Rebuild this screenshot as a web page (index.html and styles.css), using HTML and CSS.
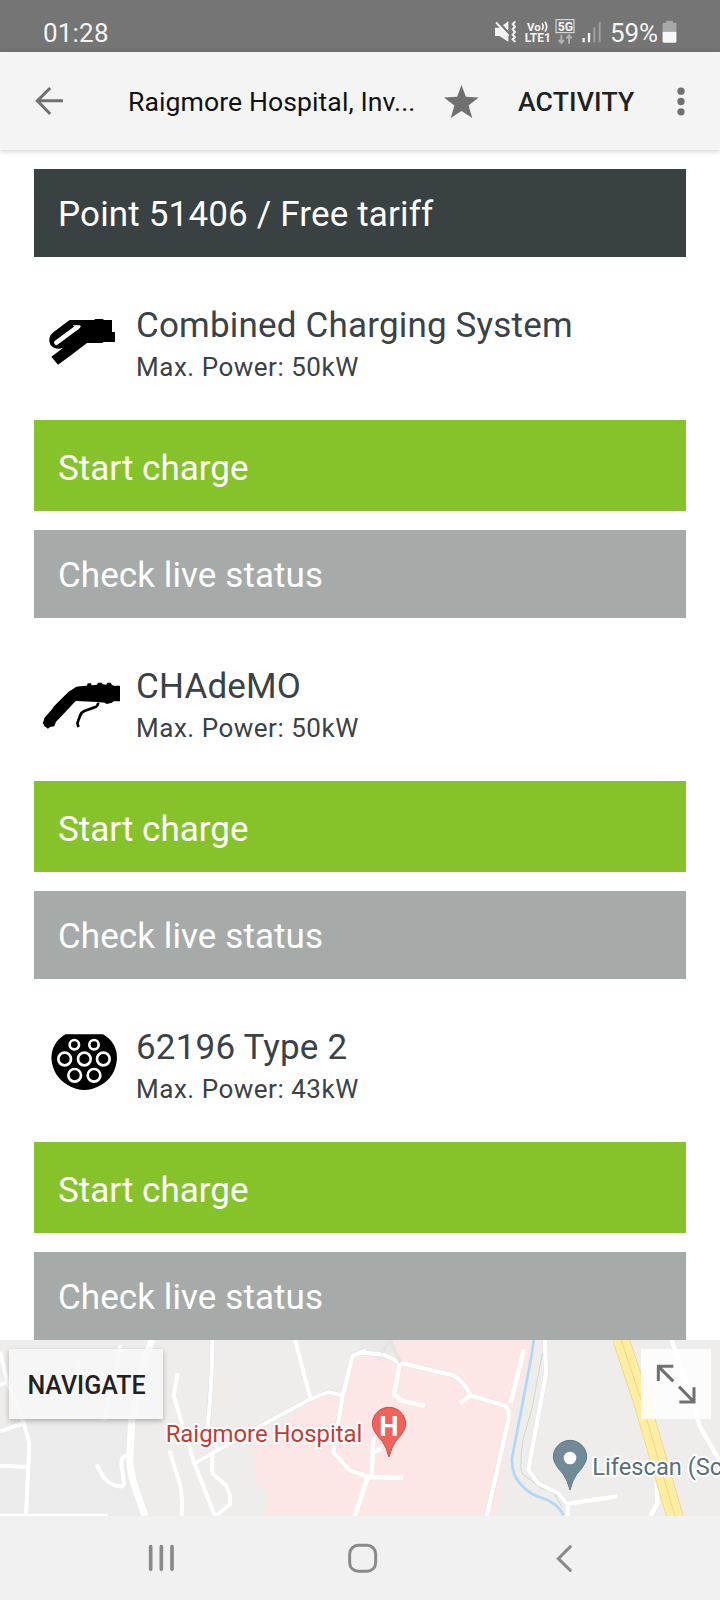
FILE: index.html
```html
<!DOCTYPE html>
<html lang="en">
<head>
  <meta charset="UTF-8" />
  <meta name="viewport" content="width=device-width, initial-scale=1.0"/>
  <title>Raigmore Hospital, Inverness</title>
  <link rel="stylesheet" href="styles.css">
</head>
<body>

  <div class="status-bar">
    <span class="clock">01:28</span>
    <svg class="status-icons" viewBox="400 50 330 90">
      <!-- muted / vibrate -->
      <path fill="#f4f4f4" d="M406 82h13l27-19v61l-27-17h-13z"/>
      <path stroke="#757575" stroke-width="7" d="M412 61l38 40"/>
      <path stroke="#f4f4f4" stroke-width="6" d="M409 66l38 41"/>
      <path fill="none" stroke="#f4f4f4" stroke-width="6" d="M467 63l-8 8 7 8-7 8 7 8-7 8 7 8-7 6 8 8"/>
      <text x="502" y="91" font-size="33" font-weight="700" textLength="41" lengthAdjust="spacingAndGlyphs">Vo</text>
      <path fill="none" stroke="#f4f4f4" stroke-width="5" d="M547 69q7 9 0 20M556 64q10 14 0 30"/>
      <text x="495" y="126" font-size="36" font-weight="700" textLength="79" lengthAdjust="spacingAndGlyphs">LTE1</text>
      <rect x="589" y="58" width="54" height="39" fill="none" stroke="#e8e8e8" stroke-width="3"/>
      <text x="594" y="91" font-size="37" font-weight="700" textLength="46" lengthAdjust="spacingAndGlyphs">5G</text>
      <path fill="none" stroke="#b0b0b0" stroke-width="6" d="M605 103v24M597 119l8 9 8-9M628 130v-24M620 114l8-9 8 9"/>
      <path stroke="#f4f4f4" stroke-width="7" d="M672 113v13M688 98v28"/>
      <path stroke="#a0a0a0" stroke-width="6" d="M704 81v45M720 66v60"/>
    </svg>
    <span class="battery-level">59%</span>
    <svg class="battery" viewBox="908 60 44 70">
      <path fill="#a8a8a8" d="M920 62h20v6h7q4 0 4 4v24h-42V72q0-4 4-4h7z"/>
      <path fill="#f8f8f8" d="M909 96h42v29q0 4-4 4h-34q-4 0-4-4z"/>
    </svg>
  </div>

  <div class="app-bar">
    <svg class="back" viewBox="100 255 95 95">
      <path fill="none" stroke="#707070" stroke-width="9" d="M189 302h-76M151 264l-38 38 38 39"/>
    </svg>
    <h1>Raigmore Hospital, Inv...</h1>
    <svg class="star" viewBox="254 252 104 98">
      <path fill="#707070" d="M306 252l13 35 38 2-30 24 11 37-32-21-32 21 11-37-31-24 39-2z"/>
    </svg>
    <span class="activity">ACTIVITY</span>
    <svg class="more" viewBox="0 0 24 86">
      <g fill="#707070"><circle cx="12" cy="12" r="11"/><circle cx="12" cy="43" r="11"/><circle cx="12" cy="74" r="11"/></g>
    </svg>
  </div>

  <div class="content">
    <div class="point-header">Point 51406 / Free tariff</div>

    <div class="connector">
      <svg class="connector-icon" viewBox="60 39 240 180">
        <path d="M149 60h73l4-3h22l4 3h24v36h9v30h-34l-4 3h-46l-47 36-4 3-36 26-20-24 35-26q-24 7-38-10-10-22 10-38z"/>
        <path stroke="#fff" stroke-width="14" stroke-linecap="round" d="M170 83l-61 45"/>
        <path fill="#fff" d="M158 76h21q6 2 1 7l-6 6z"/>
      </svg>
      <div class="connector-info">
        <h2>Combined Charging System</h2>
        <p>Max. Power: 50kW</p>
      </div>
    </div>
    <div class="btn start">Start charge</div>
    <div class="btn status">Check live status</div>

    <div class="connector">
      <svg class="connector-icon" viewBox="60 42 240 180">
        <path d="M169 80l19-2 13-1 2-7h10l2 6 16-2 3-6h11l3 5 11 1 3-6h10l4 7 6 2h18v47h-19l-5 4-16 4-6-4-21-2-66-3-45 48-14 14-5 14-13 2-6 5-6-4-5-3-2-6-3-3 3-8 2-8 23-26 6-9 43-43z"/>
        <path fill="none" stroke="#000" stroke-width="8" d="M235 128q-2 13-14 15l-26 9q-12 4-15 16l-6 16q-4 6 2 17"/>
      </svg>
      <div class="connector-info">
        <h2>CHAdeMO</h2>
        <p>Max. Power: 50kW</p>
      </div>
    </div>
    <div class="btn start">Start charge</div>
    <div class="btn status">Check live status</div>

    <div class="connector">
      <svg class="connector-icon" viewBox="60 44 240 180">
        <path d="M136 42h113q42 24 42 72-4 56-48 80-50 30-100 0-44-24-49-80 1-47 42-72z"/>
        <g fill="none" stroke="#fff" stroke-width="8">
          <circle cx="163" cy="73" r="14"/><circle cx="222" cy="73" r="14"/>
          <circle cx="134" cy="116" r="19"/><circle cx="193" cy="116" r="19"/><circle cx="250" cy="116" r="19"/>
          <circle cx="164" cy="165" r="19"/><circle cx="222" cy="165" r="19"/>
        </g>
      </svg>
      <div class="connector-info">
        <h2>62196 Type 2</h2>
        <p>Max. Power: 43kW</p>
      </div>
    </div>
    <div class="btn start">Start charge</div>
    <div class="btn status">Check live status</div>
  </div>

  <div class="map">
    <svg class="map-canvas" viewBox="0 30 2160 528">
      <rect y="30" width="2160" height="528" fill="#eeedec"/>
      <path fill="#ebebec" d="M0 280h380l20 140 38 138H0z"/>
      <!-- hospital grounds -->
      <path fill="#fce7e6" d="M1178 30h420l-30 170-50 160-30 198H795l12-70-42-30 0-70-17-28 82-70 100-70 60-35 38 3 30-110 92-22z"/>
      <path fill="#e9e9ea" d="M1080 30h100v30l-30 35-70-30z"/>
      <path fill="#eeedec" d="M1602 30h40l-60 400 100 128h-195l40-190 20-138z"/>
      <!-- burn -->
      <path fill="none" stroke="#b2d7f5" stroke-width="8" d="M1601 30l-6 45-34 180-25 130q-2 50 28 80 25 28 60 38 45 12 67 52"/>
      <path fill="none" stroke="#b8cdb8" stroke-width="2" d="M1627 70l-30 160-28 100q-10 60-4 100l60 45 35 10 25 45"/>
      <!-- streets -->
      <g fill="none" stroke="#dcdfe4" stroke-width="15" stroke-linejoin="round">
        <path d="M637 30q0 120-13 250M585 400l225-128 122-65 53-21 43 11M1028 197l30-120 40-15M1028 197l-28 170 50 55 40 12M1080 68l70 5 50 25 160 38q30 15 53 61l100 30q15 5 13 40l-66 293M1635 30l3 100-53 290 30 40 60 30 28 35v35"/>
      </g>
      <g fill="none" stroke="#fff" stroke-width="12" stroke-linejoin="round">
        <path d="M0 65l22 90 50 125 16 60-10 218M0 165l20-8M0 304l70-24M0 407l84 4M0 557h323"/>
        <path d="M360 45l-12 80-35 145M235 95l-5 60M290 403q20 45 42 58 40 18 40-2l-7-50q-4-34 20-34"/>
        <path d="M533 130l-12 65 25 85 37 120 62 158M508 362l32 100q8 30 5 96M637 375v55l42 37 11 30v26l-42 35M637 30q0 120-13 250l0 35 35 45"/>
        <path d="M885 30l47 177M585 400l225-128 122-65 53-21 43 11"/>
      </g>
      <path fill="none" stroke="#fff" stroke-width="21" d="M455 30l-40 125-20 120-6 115q2 40 18 88l28 80"/>
      <g fill="none" stroke="#fff" stroke-width="13" stroke-linejoin="round">
        <path d="M1028 197l30-120 40-15M1028 197l-28 170 50 55 40 12M1080 68l70 5 50 25 160 38q30 15 53 61l100 30q15 5 13 40l-66 293"/>
        <path d="M1200 98l-18 95 25 20 67 14M1413 195l-33 25M1572 58l-40 162M1120 320l-5 120M1080 434l25 7 105 3M1115 370l30-15M1103 441l-38 117"/>
        <path d="M1635 30l3 100-53 290 30 40 60 30 28 35v35M1705 521l147-22M2015 30l85 260 60 105M1970 460l2 60-20 38M1973 360l25 50 22 70"/>
      </g>
      <path fill="none" stroke="#e6e3e5" stroke-width="12" d="M1142 68l30-32 30 62"/>
      <!-- main road -->
      <path fill="none" stroke="#eed67e" stroke-width="51" d="M1862 25l60 180 58 200 48 165"/>
      <path fill="none" stroke="#ffeda3" stroke-width="46" d="M1862 25l60 180 58 200 48 165"/>
      <path fill="none" stroke="#f3d777" stroke-width="3" d="M1862 25l60 180 58 200 48 165"/>
      <!-- pins -->
      <path fill="#f0625a" stroke="#cf4a43" stroke-width="3" d="M1167 381q-7-29-20-47-30-32-30-52a50 50 0 0 1 100 0q0 20-30 52-13 18-20 47z"/>
      <text class="pin-letter" x="1167" y="317" text-anchor="middle">H</text>
      <path fill="#718a98" stroke="#5d7886" stroke-width="3" d="M1710 480q-7-29-20-47-30-32-30-52a50 50 0 0 1 100 0q0 20-30 52-13 18-20 47z"/>
      <circle cx="1710" cy="384" r="19" fill="#fff"/>
      <text class="place hospital" x="497" y="337" textLength="590" lengthAdjust="spacingAndGlyphs">Raigmore Hospital</text>
      <text class="place" x="1777" y="436">Lifescan (Scotland)</text>
    </svg>
    <div class="navigate">NAVIGATE</div>
    <div class="expand">
      <svg viewBox="0 0 210 210">
        <path fill="none" stroke="#707070" stroke-width="9" d="M52 96V52h45M52 52l45 45M114 113l45 46M115 159h44v-44"/>
      </svg>
    </div>
  </div>

  <div class="nav-bar">
    <svg viewBox="0 0 2160 252">
      <g fill="none" stroke="#8a8a8a" stroke-width="11" stroke-linecap="round">
        <path d="M452 92v68M484 92v68M516 92v68"/>
        <rect x="1049" y="88" width="78" height="78" rx="26" stroke-width="9"/>
        <path stroke-width="9" d="M1711 92l-36 36 36 35"/>
      </g>
    </svg>
  </div>

</body>
</html>
```
FILE: styles.css
```css
body {
  margin: 0;
  width: 720px;
  height: 1600px;
  overflow: hidden;
  display: flex;
  flex-direction: column;
  background: #fff;
  font-family: Roboto, "Liberation Sans", sans-serif;
}

svg {
  display: block;
  flex: none;
}

h1, h2, p {
  margin: 0;
  font-weight: 400;
}

/* Status bar */
.status-bar {
  flex: none;
  height: 52px;
  box-sizing: border-box;
  padding: 14px 43px 0 43px;
  display: flex;
  align-items: flex-start;
  background: #757575;
  color: #f4f4f4;
  font-size: 26px;
  line-height: 38px;
}

.clock {
  flex: 1;
  letter-spacing: 0.2px;
}

.status-icons {
  width: 110px;
  height: 30px;
  margin: 3px 7px 0 0;
  fill: #f4f4f4;
}

.battery-level {
  width: 51px;
  white-space: nowrap;
  letter-spacing: -0.1px;
}

.battery {
  width: 15px;
  height: 23px;
  margin: 6px 0 0 1px;
}

/* App bar */
.app-bar {
  flex: none;
  position: relative;
  height: 98px;
  box-sizing: border-box;
  padding: 0 35px 0 33px;
  display: flex;
  align-items: center;
  background: #f4f4f4;
  box-shadow: 0 1px 6px rgba(0, 0, 0, 0.2);
}

.back {
  width: 32px;
  height: 32px;
}

.app-bar h1 {
  width: 291px;
  margin-left: 63px;
  padding-top: 2px;
  font-size: 26.6px;
  line-height: 34px;
  letter-spacing: 0.08px;
  white-space: nowrap;
  color: #111;
}

.star {
  width: 35px;
  height: 33px;
  margin-left: 25px;
}

.activity {
  flex: 1;
  margin-left: 39px;
  padding-top: 2px;
  font-size: 26.6px;
  font-weight: 500;
  line-height: 34px;
  letter-spacing: 0.15px;
  color: #212121;
}

.more {
  width: 8px;
  height: 29px;
}

/* Connectors */
.content {
  flex: none;
  height: 1190px;
  overflow: hidden;
  box-sizing: border-box;
  padding: 19px 34px 0;
}

.point-header {
  height: 88px;
  padding-left: 24px;
  background: #394143;
  color: #fff;
  font-size: 35px;
  line-height: 92px;
  letter-spacing: 0.16px;
}

.connector {
  height: 163px;
  box-sizing: border-box;
  padding: 46px 0 0 6px;
  display: flex;
}

.connector-icon {
  width: 80px;
  height: 60px;
  margin-top: 10px;
  overflow: visible;
}

.connector-info {
  margin-left: 16px;
  color: #3b4246;
}

.connector-info h2 {
  font-size: 35px;
  line-height: 46px;
  letter-spacing: 0.18px;
}

.connector-info p {
  font-size: 26px;
  line-height: 36px;
  letter-spacing: 0.52px;
}

.btn {
  height: 88px;
  padding-left: 24px;
  color: #fff;
  font-size: 35px;
  line-height: 92px;
  letter-spacing: 0.08px;
}

.btn.start {
  height: 91px;
  line-height: 97px;
  letter-spacing: 0;
  background: #86c32b;
}

.btn.status {
  margin-top: 19px;
  background: #a6aaa9;
}

/* Map */
.map {
  flex: none;
  position: relative;
  height: 176px;
  overflow: hidden;
}

.map-canvas {
  width: 720px;
  height: 176px;
}

.place {
  font-size: 71px;
  fill: #586f7c;
  stroke: #fff;
  stroke-width: 12px;
  stroke-linejoin: round;
  paint-order: stroke;
}

.place.hospital {
  font-size: 73px;
  fill: #c63a34;
}

.pin-letter {
  font-size: 82px;
  font-weight: 700;
  fill: #fff;
}

.navigate {
  position: absolute;
  left: 9px;
  top: 9px;
  width: 154px;
  height: 70px;
  background: rgba(247, 247, 247, 0.88);
  box-shadow: 0 2px 5px rgba(0, 0, 0, 0.28);
  color: #212121;
  font-size: 25px;
  font-weight: 500;
  line-height: 74px;
  text-indent: 1px;
  text-align: center;
}

.expand {
  position: absolute;
  left: 641px;
  top: 9px;
  width: 70px;
  height: 70px;
  background: rgba(255, 255, 255, 0.82);
}

/* System navigation */
.nav-bar {
  flex: none;
  height: 84px;
  background: #f1f1f1;
}
```
